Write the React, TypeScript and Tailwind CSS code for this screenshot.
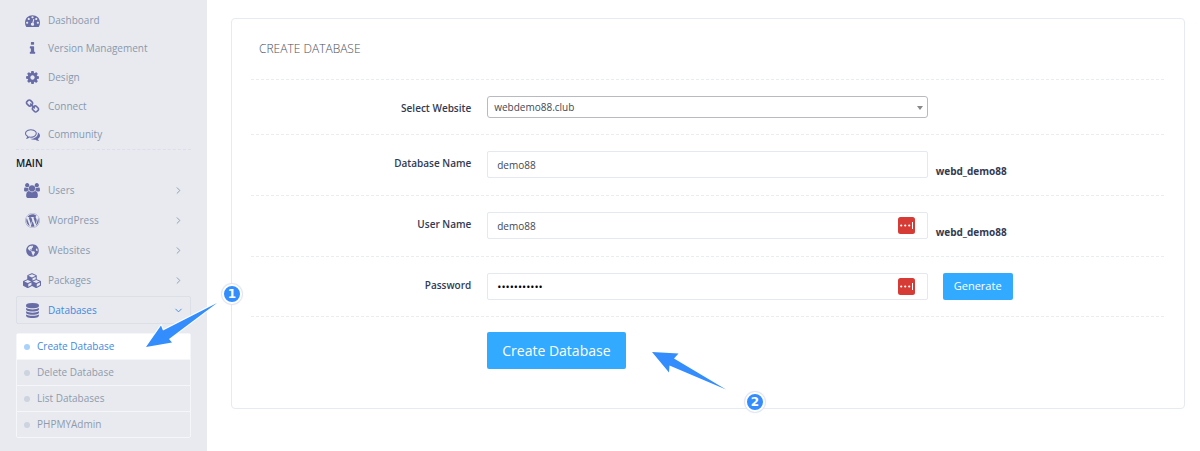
import type { ReactNode } from "react";
import { FaGlobeAmericas, FaWordpress } from "react-icons/fa";
import { ChevronDown, ChevronRight } from "lucide-react";

const glyphs = {
  dashboard: {
    box: "0 0 1792 1792",
    d: "M384 1152q0-53-37.5-90.5t-90.5-37.5-90.5 37.5-37.5 90.5 37.5 90.5 90.5 37.5 90.5-37.5 37.5-90.5zm192-448q0-53-37.5-90.5t-90.5-37.5-90.5 37.5-37.5 90.5 37.5 90.5 90.5 37.5 90.5-37.5 37.5-90.5zm428 481l101-382q6-26-7.5-48.5t-38.5-29.5-48 6.5-30 39.5l-101 382q-60 5-107 43.5t-63 98.5q-20 77 20 146t117 89 146-20 89-117q16-60-6-117t-72-91zm660-33q0-53-37.5-90.5t-90.5-37.5-90.5 37.5-37.5 90.5 37.5 90.5 90.5 37.5 90.5-37.5 37.5-90.5zm-640-640q0-53-37.5-90.5t-90.5-37.5-90.5 37.5-37.5 90.5 37.5 90.5 90.5 37.5 90.5-37.5 37.5-90.5zm448 192q0-53-37.5-90.5t-90.5-37.5-90.5 37.5-37.5 90.5 37.5 90.5 90.5 37.5 90.5-37.5 37.5-90.5zm320 448q0 261-141 483-19 29-54 29h-1402q-35 0-54-29-141-221-141-483 0-182 71-348t191-286 286-191 348-71 348 71 286 191 191 286 71 348z",
  },
  info: {
    box: "0 0 1792 1792",
    d: "M1216 1344v128q0 26-19 45t-45 19h-512q-26 0-45-19t-19-45v-128q0-26 19-45t45-19h64v-384h-64q-26 0-45-19t-19-45v-128q0-26 19-45t45-19h384q26 0 45 19t19 45v576h64q26 0 45 19t19 45zm-128-1152v192q0 26-19 45t-45 19h-256q-26 0-45-19t-19-45v-192q0-26 19-45t45-19h256q26 0 45 19t19 45z",
  },
  cog: {
    box: "0 0 1792 1792",
    d: "M1152 896q0-106-75-181t-181-75-181 75-75 181 75 181 181 75 181-75 75-181zm512-109v222q0 12-8 23t-20 13l-185 28q-19 54-39 91 35 50 107 138 10 12 10 25t-9 23q-27 37-99 108t-94 71q-12 0-26-9l-138-108q-44 23-91 38-16 136-29 186-7 28-36 28h-222q-14 0-24.5-8.5t-11.5-21.5l-28-184q-49-16-90-37l-141 107q-10 9-25 9-14 0-25-11-126-114-165-168-7-10-7-23 0-12 8-23 15-21 51-66.5t54-70.5q-27-50-41-99l-183-27q-13-2-21-12.5t-8-23.5v-222q0-12 8-23t19-13l186-28q14-46 39-92-40-57-107-138-10-12-10-24 0-10 9-23 26-36 98.5-107.5t94.5-71.5q13 0 26 10l138 107q44-23 91-38 16-136 29-186 7-28 36-28h222q14 0 24.5 8.5t11.5 21.5l28 184q49 16 90 37l142-107q9-9 24-9 13 0 25 10 129 119 165 170 7 8 7 22 0 12-8 23-15 21-51 66.5t-54 70.5q26 50 41 98l183 28q13 2 21 12.5t8 23.5z",
  },
  link: {
    box: "0 0 1792 1792",
    d: "M1520 1216q0-40-28-68l-208-208q-28-28-68-28-42 0-72 32 3 3 19 18.5t21.5 21.5 15 19 13 25.5 3.5 27.5q0 40-28 68t-68 28q-15 0-27.5-3.5t-25.5-13-19-15-21.5-21.5-18.5-19q-33 31-33 73 0 40 28 68l206 207q27 27 68 27 40 0 68-26l147-146q28-28 28-67zm-703-705q0-40-28-68l-206-207q-28-28-68-28-39 0-68 27l-147 146q-28 28-28 67 0 40 28 68l208 208q27 27 68 27 42 0 72-31-3-3-19-18.5t-21.5-21.5-15-19-13-25.5-3.5-27.5q0-40 28-68t68-28q15 0 27.5 3.5t25.5 13 19 15 21.5 21.5 18.5 19q33-31 33-73zm895 705q0 120-85 203l-147 146q-83 83-203 83-121 0-204-85l-206-207q-83-83-83-203 0-123 88-209l-88-88q-86 88-208 88-120 0-204-84l-208-208q-84-84-84-204t85-203l147-146q83-83 203-83 121 0 204 85l206 207q83 83 83 203 0 123-88 209l88 88q86-88 208-88 120 0 204 84l208 208q84 84 84 204z",
  },
  comments: {
    box: "0 0 1792 1792",
    d: "M704 384q-153 0-286 52t-211.5 141-78.5 191q0 82 53 158t149 132l97 56-35 84q34-20 62-39l44-31 53 10q78 14 153 14 153 0 286-52t211.5-141 78.5-191-78.5-191-211.5-141-286-52zm0-128q191 0 353.5 68.5t256.5 186.5 94 257-94 257-256.5 186.5-353.5 68.5q-86 0-176-16-124 88-278 128-36 9-86 16h-3q-11 0-20.5-8t-11.5-21q-1-3-1-6.5t.5-6.5 2-6l2.5-5 3.5-5.5 4-5 4.5-5 4-4.5q5-6 23-25t26-29.5 22.5-29 25-38.5 20.5-44q-124-72-195-177t-71-224q0-139 94-257t256.5-186.5 353.5-68.5zm822 1169q10 24 20.5 44t25 38.5 22.5 29 26 29.5 23 25q1 1 4 4.5t4.5 5 4 5 3.5 5.5l2.5 5 2 6 .5 6.5-1 6.5q-3 14-13 22t-22 7q-50-7-86-16-154-40-278-128-90 16-176 16-271 0-472-132 58 4 88 4 161 0 309-45t264-129q125-92 192-212t67-254q0-77-23-152 129 71 204 178t75 230q0 120-71 224.5t-195 176.5z",
  },
  users: {
    box: "-64 0 1920 1792",
    d: "M529 896q-162 5-265 128h-134q-82 0-138-40.5t-56-118.5q0-353 124-353 6 0 43.5 21t97.5 42.5 119 21.5q67 0 133-23-5 37-5 66 0 139 81 256zm1071 637q0 120-73 189.5t-194 69.5h-874q-121 0-194-69.5t-73-189.5q0-53 3.5-103.5t14-109 26.5-108.5 43-97.5 62-81 85.5-53.5 111.5-20q10 0 43 21.5t73 48 107 48 135 21.5 135-21.5 107-48 73-48 43-21.5q61 0 111.5 20t85.5 53.5 62 81 43 97.5 26.5 108.5 14 109 3.5 103.5zm-1024-1277q0 106-75 181t-181 75-181-75-75-181 75-181 181-75 181 75 75 181zm704 384q0 159-112.5 271.5t-271.5 112.5-271.5-112.5-112.5-271.5 112.5-271.5 271.5-112.5 271.5 112.5 112.5 271.5zm576 225q0 78-56 118.5t-138 40.5h-134q-103-123-265-128 81-117 81-256 0-29-5-66 66 23 133 23 59 0 119-21.5t97.5-42.5 43.5-21q124 0 124 353zm-128-609q0 106-75 181t-181 75-181-75-75-181 75-181 181-75 181 75 75 181z",
  },
  cubes: {
    box: "-128 0 2176 1792",
    d: "M512 1646l384-192v-314l-384 164v342zm-64-454l404-173-404-173-404 173zm1088 454l384-192v-314l-384 164v342zm-64-454l404-173-404-173-404 173zm-448-293l384-165v-266l-384 164v267zm-64-379l441-189-441-189-441 189zm1088 518v416q0 36-19 67t-52 47l-448 224q-25 14-57 14t-57-14l-448-224q-4-2-7-4-2 2-7 4l-448 224q-25 14-57 14t-57-14l-448-224q-33-16-52-47t-19-67v-416q0-38 21.5-70t56.5-48l434-186v-400q0-38 21.5-70t56.5-48l448-192q23-10 50-10t50 10l448 192q35 16 56.5 48t21.5 70v400l434 186q36 16 57 48t21 70z",
  },
  database: {
    box: "0 0 1792 1792",
    d: "M896 768q237 0 443-43t325-127v170q0 69-103 128t-280 93.5-385 34.5-385-34.5-280-93.5-103-128v-170q119 84 325 127t443 43zm0 768q237 0 443-43t325-127v170q0 69-103 128t-280 93.5-385 34.5-385-34.5-280-93.5-103-128v-170q119 84 325 127t443 43zm0-384q237 0 443-43t325-127v170q0 69-103 128t-280 93.5-385 34.5-385-34.5-280-93.5-103-128v-170q119 84 325 127t443 43zm0-1152q208 0 385 34.5t280 93.5 103 128v128q0 69-103 128t-280 93.5-385 34.5-385-34.5-280-93.5-103-128v-128q0-69 103-128t280-93.5 385-34.5z",
  },
};

function Glyph({ name, className }: { name: keyof typeof glyphs; className: string }) {
  return (
    <svg viewBox={glyphs[name].box} className={className} fill="currentColor" aria-hidden="true">
      <path d={glyphs[name].d} />
    </svg>
  );
}

const topLinks: { label: string; icon: ReactNode }[] = [
  { label: "Dashboard", icon: <Glyph name="dashboard" className="size-[15px]" /> },
  { label: "Version Management", icon: <Glyph name="info" className="size-[15px]" /> },
  { label: "Design", icon: <Glyph name="cog" className="size-[15px]" /> },
  { label: "Connect", icon: <Glyph name="link" className="size-[15px]" /> },
  { label: "Community", icon: <Glyph name="comments" className="size-[15px]" /> },
];

const mainLinks: { label: string; icon: ReactNode }[] = [
  { label: "Users", icon: <Glyph name="users" className="h-[15px] w-4" /> },
  { label: "WordPress", icon: <FaWordpress className="size-[15px]" /> },
  { label: "Websites", icon: <FaGlobeAmericas className="size-[13px]" /> },
  { label: "Packages", icon: <Glyph name="cubes" className="h-[15px] w-[18px]" /> },
];

const subLinks = ["Create Database", "Delete Database", "List Databases", "PHPMYAdmin"];

function IconCell({ children }: { children: ReactNode }) {
  return <span className="flex w-[18px] shrink-0 justify-center text-[#686ca6]">{children}</span>;
}

function Sidebar() {
  return (
    <nav className="w-[207px] shrink-0 bg-[#e8eaf0] px-4 pt-[6px] text-[10px] text-[#8999ad]">
      <ul className="grid h-36 grid-rows-5 border-b border-dashed border-[#dcdfe9]">
        {topLinks.map((l) => (
          <li key={l.label} className="flex">
            <a href="#" className="flex flex-1 items-center gap-[7px] pl-[7px]">
              <IconCell>{l.icon}</IconCell>
              {l.label}
            </a>
          </li>
        ))}
      </ul>
      <h2 className="h-[25px] pt-1 text-[10px] leading-[18px] font-semibold text-[#111827]">MAIN</h2>
      <ul>
        {mainLinks.map((l) => (
          <li key={l.label}>
            <a href="#" className="flex h-[30px] items-center gap-[7px] px-[7px]">
              <IconCell>{l.icon}</IconCell>
              <span className="flex-1">{l.label}</span>
              <ChevronRight className="size-[11px]" aria-hidden="true" />
            </a>
          </li>
        ))}
        <li>
          <a
            href="#"
            className="mt-px flex h-7 items-center gap-[7px] rounded-xs border border-[#dcdfe6] px-[6px] text-[#4189de]"
          >
            <IconCell>
              <Glyph name="database" className="size-[15px]" />
            </IconCell>
            <span className="flex-1">Databases</span>
            <ChevronDown className="size-[11px]" aria-hidden="true" />
          </a>
          <ul className="mt-[9px] rounded-xs border border-[#f5f6f9]">
            {subLinks.map((label, i) => (
              <li key={label} className={i === 0 ? "bg-white text-[#4189de]" : "border-t border-[#f5f6f9] text-[#8f9bab]"}>
                <a href="#" className="flex h-[25px] items-center gap-[7px] pl-[7px]">
                  <span className={i === 0 ? "size-[6px] rounded-full bg-[#a9d2fb]" : "size-[6px] rounded-full bg-[#cdd4df]"} />
                  {label}
                </a>
              </li>
            ))}
          </ul>
        </li>
      </ul>
    </nav>
  );
}

function KeyBadge() {
  return (
    <svg viewBox="0 0 17 17" className="absolute top-[5px] right-[13px] size-[17px]" aria-hidden="true">
      <rect width="17" height="17" rx="2.5" fill="#d63b35" />
      <circle cx="3.2" cy="8.5" r="1.1" fill="#fff" />
      <circle cx="7.2" cy="8.5" r="1.1" fill="#fff" />
      <circle cx="11.2" cy="8.5" r="1.1" fill="#fff" />
      <rect x="14" y="5" width="1" height="7" fill="#fff" />
    </svg>
  );
}

function Row({ id, label, children, aside }: { id: string; label: string; children: ReactNode; aside?: ReactNode }) {
  return (
    <div className="grid grid-cols-4 border-b border-dashed border-[#e9edf2] py-4">
      <label htmlFor={id} className="pt-1 pr-2 text-right text-[10px] leading-4 font-semibold text-[#323a52]">
        {label}
      </label>
      <div className="col-span-2 px-2">
        <div className="relative">{children}</div>
      </div>
      <div>{aside}</div>
    </div>
  );
}

const field = "block h-[27px] w-full rounded-xs border border-[#e4e8ef] bg-white px-[9px] outline-none";

function Callout({ n, className }: { n: number; className: string }) {
  return (
    <span className={`absolute flex size-5 items-center justify-center rounded-full border-2 border-white bg-[#338dfd] font-['DejaVu_Sans'] text-xs leading-none font-bold text-white shadow-[0_0_1px_1px_#e0e3f0] ${className}`}>
      {n}
    </span>
  );
}

export default function App() {
  return (
    <div className="relative flex min-h-screen bg-white font-['Open_Sans',sans-serif]">
      <Sidebar />
      <main className="min-w-0 flex-1 pt-[18px] pr-[15px] pl-6">
        <form
          className="rounded-[4px] border border-[#e6eaf1] pr-5 pb-[39px] pl-[19px]"
          onSubmit={(e) => e.preventDefault()}
        >
          <h1 className="border-b border-dashed border-[#e9edf2] py-5 pl-2 text-xs leading-5 font-light text-[#4b5060]">
            CREATE DATABASE
          </h1>
          <Row id="site" label="Select Website">
            <select
              id="site"
              className="block h-[22px] w-full appearance-none rounded-[3px] border border-[#b8babf] bg-white px-[6px] text-[10px] text-[#414955] outline-none"
            >
              <option>webdemo88.club</option>
            </select>
            <svg viewBox="0 0 6 4" className="pointer-events-none absolute top-[10px] right-[5px] h-1 w-[6px]" aria-hidden="true">
              <path d="M0 0h6L3 4z" fill="#888" />
            </svg>
          </Row>
          <Row
            id="db"
            label="Database Name"
            aside={<p className="pt-3 text-[10px] leading-4 font-bold text-[#323a52]">webd_demo88</p>}
          >
            <input id="db" defaultValue="demo88" className={`${field} text-[10px] text-[#414955]`} />
          </Row>
          <Row
            id="user"
            label="User Name"
            aside={<p className="pt-3 text-[10px] leading-4 font-bold text-[#323a52]">webd_demo88</p>}
          >
            <input id="user" defaultValue="demo88" className={`${field} text-[10px] text-[#414955]`} />
            <KeyBadge />
          </Row>
          <Row
            id="pass"
            label="Password"
            aside={
              <button type="button" className="ml-[7px] block h-[27px] rounded-xs bg-[#32aaff] px-[11px] text-[11px] text-white">
                Generate
              </button>
            }
          >
            <input id="pass" type="password" defaultValue="demodemo888" className={`${field} text-[11px] text-black`} />
            <KeyBadge />
          </Row>
          <div className="grid grid-cols-4 pt-[15px]">
            <div className="col-span-3 col-start-2 pl-2">
              <button type="submit" className="block h-[37px] rounded-xs bg-[#32aaff] px-[15px] text-sm text-white">
                Create Database
              </button>
            </div>
          </div>
        </form>
      </main>

      <svg viewBox="0 0 76 50" className="pointer-events-none absolute top-[301px] left-[143px] h-[50px] w-[76px]" aria-hidden="true">
        <path d="M3 46L18 24.500L20 29.500L74 2L26 38L29 41.500Z" fill="#338dfd" stroke="#fff" strokeWidth="2" paintOrder="stroke" />
      </svg>
      <Callout n={1} className="top-[284px] left-[222px]" />
      <svg viewBox="0 0 76 42" className="pointer-events-none absolute top-[350px] left-[651px] h-[42px] w-[76px]" aria-hidden="true">
        <path d="M1 2L27.500 3.500L23 8.500L75 39.500L18.500 15.500L18 22.500Z" fill="#338dfd" />
      </svg>
      <Callout n={2} className="top-[392px] left-[745px]" />
    </div>
  );
}
